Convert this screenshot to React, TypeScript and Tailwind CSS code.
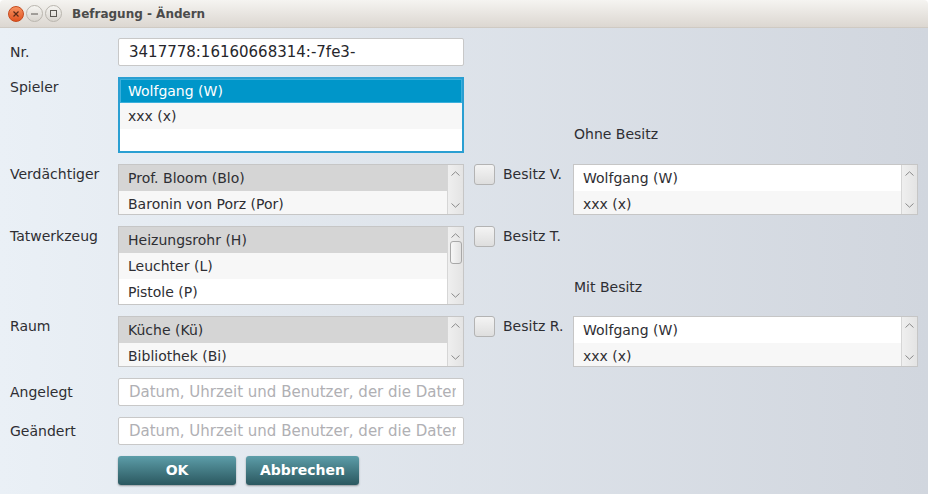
import React from "react";

const FONT = { fontFamily: '"DejaVu Sans", "Liberation Sans", sans-serif' };

function Chevron({ up }: { up?: boolean }) {
  return (
    <svg width="9" height="5" viewBox="0 0 9 5" className="block">
      <path
        d={up ? "M0.5 4.5 L4.5 0.8 L8.5 4.5" : "M0.5 0.5 L4.5 4.2 L8.5 0.5"}
        fill="none"
        stroke="#8a8a8a"
        strokeWidth="1"
      />
    </svg>
  );
}

function ScrollBar({ thumb }: { thumb?: boolean }) {
  return (
    <div className="relative w-[16px] shrink-0 border-l border-[#d6d6d6] bg-gradient-to-r from-[#efefef] to-[#e4e4e4] flex flex-col items-center justify-between py-[6px]">
      <Chevron up />
      {thumb && (
        <div className="absolute left-[2px] top-[14px] w-[12px] h-[23px] rounded-[3px] border border-[#a8a8a8] bg-gradient-to-r from-[#f7f7f7] to-[#e2e2e2]" />
      )}
      <Chevron />
    </div>
  );
}

type Row = { text: string; kind: "sel" | "white" | "alt" };

function ListBox({
  rows,
  height,
  thumb,
}: {
  rows: Row[];
  height: string;
  thumb?: boolean;
}) {
  return (
    <div className={`flex ${height} border border-[#c6c6c6] bg-white overflow-hidden`}>
      <div className="flex-1 flex flex-col overflow-hidden">
        {rows.map((r, i) => (
          <div
            key={i}
            className={`h-[26px] shrink-0 flex items-center pl-[9px] text-[14px] text-[#2e2e33] ${
              r.kind === "sel"
                ? "bg-[#d5d5d5]"
                : r.kind === "alt"
                ? "bg-[#f7f7f7]"
                : "bg-white"
            }`}
          >
            {r.text}
          </div>
        ))}
      </div>
      <ScrollBar thumb={thumb} />
    </div>
  );
}

function CheckLabel({ label }: { label: string }) {
  return (
    <div className="flex items-start pl-[10px]">
      <div className="w-[21px] h-[21px] rounded-[3px] border border-[#b3b3b3] bg-gradient-to-b from-[#f4f4f4] to-[#dedede]" />
      <span className="ml-[8px] mt-[2px] leading-[17px] text-[14px] text-[#2e2e33]">{label}</span>
    </div>
  );
}

function Label({ text, center }: { text: string; center?: boolean }) {
  return (
    <div
      className={`text-[14px] leading-[17px] text-[#2e2e33] ${
        center ? "self-center" : "mt-[2px]"
      }`}
    >
      {text}
    </div>
  );
}

function TextField({ value, placeholder }: { value?: string; placeholder?: string }) {
  return (
    <div className="h-[28px] border border-[#c8c8c8] rounded-[2px] bg-white flex items-center pl-[10px] pr-[7px]">
      <div className="flex-1 overflow-hidden whitespace-nowrap text-[15px] leading-[18px]">
        {value ? (
          <span className="text-[#26262b]">{value}</span>
        ) : (
          <span className="text-[#b0b0b4]">{placeholder}</span>
        )}
      </div>
    </div>
  );
}

function Button({ text, w }: { text: string; w: string }) {
  return (
    <div
      className={`${w} h-[29px] rounded-[3px] bg-gradient-to-b from-[#5d9ea9] to-[#2b5860] shadow-[0_1px_2px_rgba(0,0,0,0.35)] flex items-center justify-center text-white font-bold text-[14px]`}
    >
      {text}
    </div>
  );
}

function WinButton({ kind }: { kind: "close" | "min" | "max" }) {
  if (kind === "close") {
    return (
      <div className="w-[16px] h-[16px] rounded-full bg-gradient-to-b from-[#f7915f] to-[#e0521d] border border-[#c6491c] flex items-center justify-center">
        <svg width="6" height="6" viewBox="0 0 6 6">
          <path d="M0.5 0.5 L5.5 5.5 M5.5 0.5 L0.5 5.5" stroke="#5a2a16" strokeWidth="1.2" />
        </svg>
      </div>
    );
  }
  return (
    <div className="w-[17px] h-[17px] rounded-full bg-gradient-to-b from-[#f6f5f2] to-[#d9d5cf] border border-[#b9b5ae] flex items-center justify-center">
      {kind === "min" ? (
        <svg width="7" height="2" viewBox="0 0 7 2">
          <path d="M0 1 H7" stroke="#5a5752" strokeWidth="1" />
        </svg>
      ) : (
        <svg width="7" height="7" viewBox="0 0 7 7">
          <rect x="0.5" y="0.5" width="6" height="6" fill="none" stroke="#5a5752" strokeWidth="1" />
        </svg>
      )}
    </div>
  );
}

export default function App() {
  return (
    <div className="w-[928px] h-[494px] overflow-hidden flex flex-col" style={FONT}>
      <div className="h-[28px] shrink-0 bg-gradient-to-b from-[#f5f4f1] to-[#dcd7d1] border-b border-[#cfcac3] flex items-center pl-[8px] rounded-t-[4px]">
        <div className="flex items-center gap-[2px]">
          <WinButton kind="close" />
          <WinButton kind="min" />
          <WinButton kind="max" />
        </div>
        <span className="ml-[10px] font-bold text-[12px] text-[#4b4b4b]">Befragung - Ändern</span>
      </div>
      <div className="flex-1 bg-gradient-to-r from-[#eaf0f6] to-[#d1d6de] pt-[10px] pl-[10px]">
        <div className="grid grid-cols-[108px_346px_109px_345px] gap-y-[11px]">
          {/* Nr. */}
          <Label text="Nr." center />
          <TextField value="3417778:16160668314:-7fe3-" />
          <div />
          <div />

          {/* Spieler */}
          <Label text="Spieler" />
          <div className="h-[76px] border-2 border-[#2a9fd2] bg-white flex flex-col overflow-hidden">
            <div className="h-[24px] shrink-0 bg-[#0096c9] border border-[#3bb0dc] flex items-center pl-[7px] text-[14px] text-white">
              Wolfgang (W)
            </div>
            <div className="h-[26px] shrink-0 bg-[#f7f7f7] flex items-center pl-[8px] text-[14px] text-[#2e2e33]">
              xxx (x)
            </div>
          </div>
          <div />
          <div className="self-end mb-[10px] pl-[1px] text-[14px] leading-[17px] text-[#2e2e33]">Ohne Besitz</div>

          {/* Verdächtiger */}
          <Label text="Verdächtiger" />
          <ListBox
            height="h-[51px]"
            rows={[
              { text: "Prof. Bloom (Blo)", kind: "sel" },
              { text: "Baronin von Porz (Por)", kind: "alt" },
            ]}
          />
          <CheckLabel label="Besitz V." />
          <ListBox
            height="h-[51px]"
            rows={[
              { text: "Wolfgang (W)", kind: "white" },
              { text: "xxx (x)", kind: "alt" },
            ]}
          />

          {/* Tatwerkzeug */}
          <Label text="Tatwerkzeug" />
          <ListBox
            height="h-[79px]"
            thumb
            rows={[
              { text: "Heizungsrohr (H)", kind: "sel" },
              { text: "Leuchter (L)", kind: "alt" },
              { text: "Pistole (P)", kind: "white" },
            ]}
          />
          <CheckLabel label="Besitz T." />
          <div className="self-end mb-[9px] pl-[1px] text-[14px] leading-[17px] text-[#2e2e33]">Mit Besitz</div>

          {/* Raum */}
          <Label text="Raum" />
          <ListBox
            height="h-[51px]"
            rows={[
              { text: "Küche (Kü)", kind: "sel" },
              { text: "Bibliothek (Bi)", kind: "alt" },
            ]}
          />
          <CheckLabel label="Besitz R." />
          <ListBox
            height="h-[51px]"
            rows={[
              { text: "Wolfgang (W)", kind: "white" },
              { text: "xxx (x)", kind: "alt" },
            ]}
          />

          {/* Angelegt */}
          <Label text="Angelegt" center />
          <TextField placeholder="Datum, Uhrzeit und Benutzer, der die Daten angelegt hat" />
          <div />
          <div />

          {/* Geändert */}
          <Label text="Geändert" center />
          <TextField placeholder="Datum, Uhrzeit und Benutzer, der die Daten geändert hat" />
          <div />
          <div />

          {/* Buttons */}
          <div />
          <div className="flex gap-[10px]">
            <Button text="OK" w="w-[118px]" />
            <Button text="Abbrechen" w="w-[113px]" />
          </div>
          <div />
          <div />
        </div>
      </div>
    </div>
  );
}
